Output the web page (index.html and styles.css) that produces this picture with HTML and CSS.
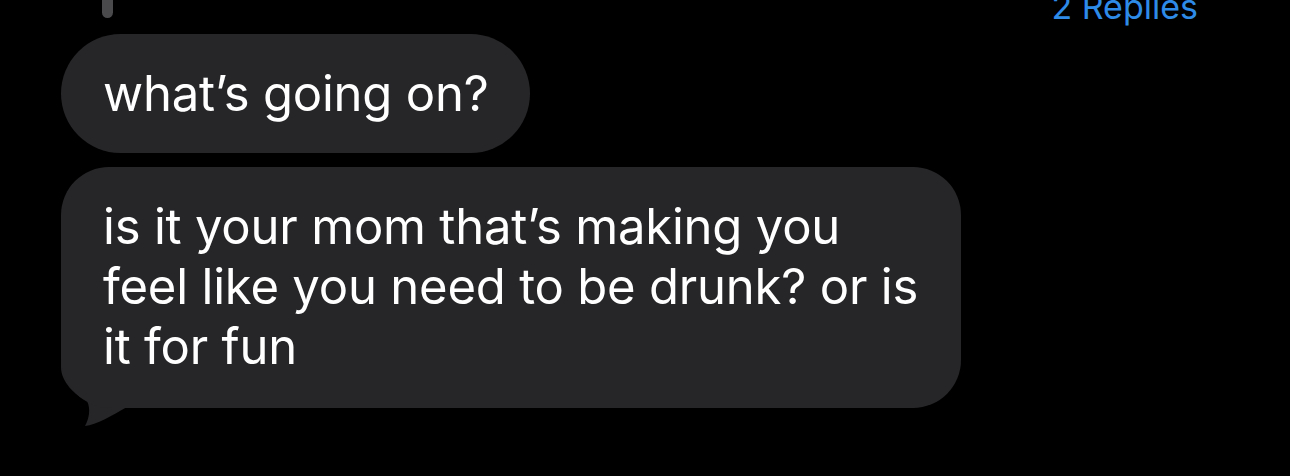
FILE: index.html
```html
<!DOCTYPE html>
<html lang="en">

<head>
    <meta charset="UTF-8">
    <meta name="viewport" content="width=device-width, initial-scale=1.0">
    <title>Messages</title>
    <link rel="stylesheet" href="styles.css">
</head>

<body>
    <div class="thread-top">
        <div class="thread-line"></div>
        <a class="replies" href="#">2 Replies</a>
    </div>

    <div class="messages">
        <div class="bubble">what’s going on?</div>

        <div class="bubble bubble-tail">
            is it your mom that’s making you feel like you need to be drunk? or is it for fun
            <svg class="tail" width="70" height="70" viewBox="0 0 70 70">
                <path d="M0 0 L0 10 C0 25 14 38 26 44 C30 52 28 62 24 69 C35 68 52 58 66 50 L70 50 L70 0 Z" />
            </svg>
        </div>
    </div>
</body>

</html>
```

FILE: styles.css
```css
* {
    box-sizing: border-box;
    margin: 0;
    padding: 0;
}

html,
body {
    height: 100%;
}

body {
    font-family: Inter, "Noto Sans", sans-serif;
    background-color: #000;
    color: #fff;
    min-height: 476px;
}

.thread-top {
    display: flex;
    justify-content: space-between;
    align-items: flex-start;
    height: 18px;
    padding: 0 92px 0 102px;
}

.thread-line {
    width: 11px;
    height: 18px;
    background-color: #4a4a4d;
    border-radius: 0 0 6px 6px;
}

.replies {
    font-size: 34px;
    line-height: 14px;
    color: #2f8be8;
    text-decoration: none;
}

.messages {
    display: flex;
    flex-direction: column;
    align-items: flex-start;
    gap: 14px;
    margin-top: 16px;
    padding-left: 61px;
}

.bubble {
    position: relative;
    background-color: #262629;
    font-size: 49px;
    letter-spacing: -0.2px;
    line-height: 60px;
    padding: 30px 41px 29px 42px;
    border-radius: 60px;
}

.bubble-tail {
    width: 900px;
    padding: 30px 38px 31px 42px;
    border-radius: 48px 48px 48px 50px;
}

/* little curl on the bottom left, like iMessage */
.tail {
    display: block;
    position: absolute;
    left: 0;
    bottom: -19px;
    z-index: -1;
    overflow: visible;
    fill: #262629;
}
```
